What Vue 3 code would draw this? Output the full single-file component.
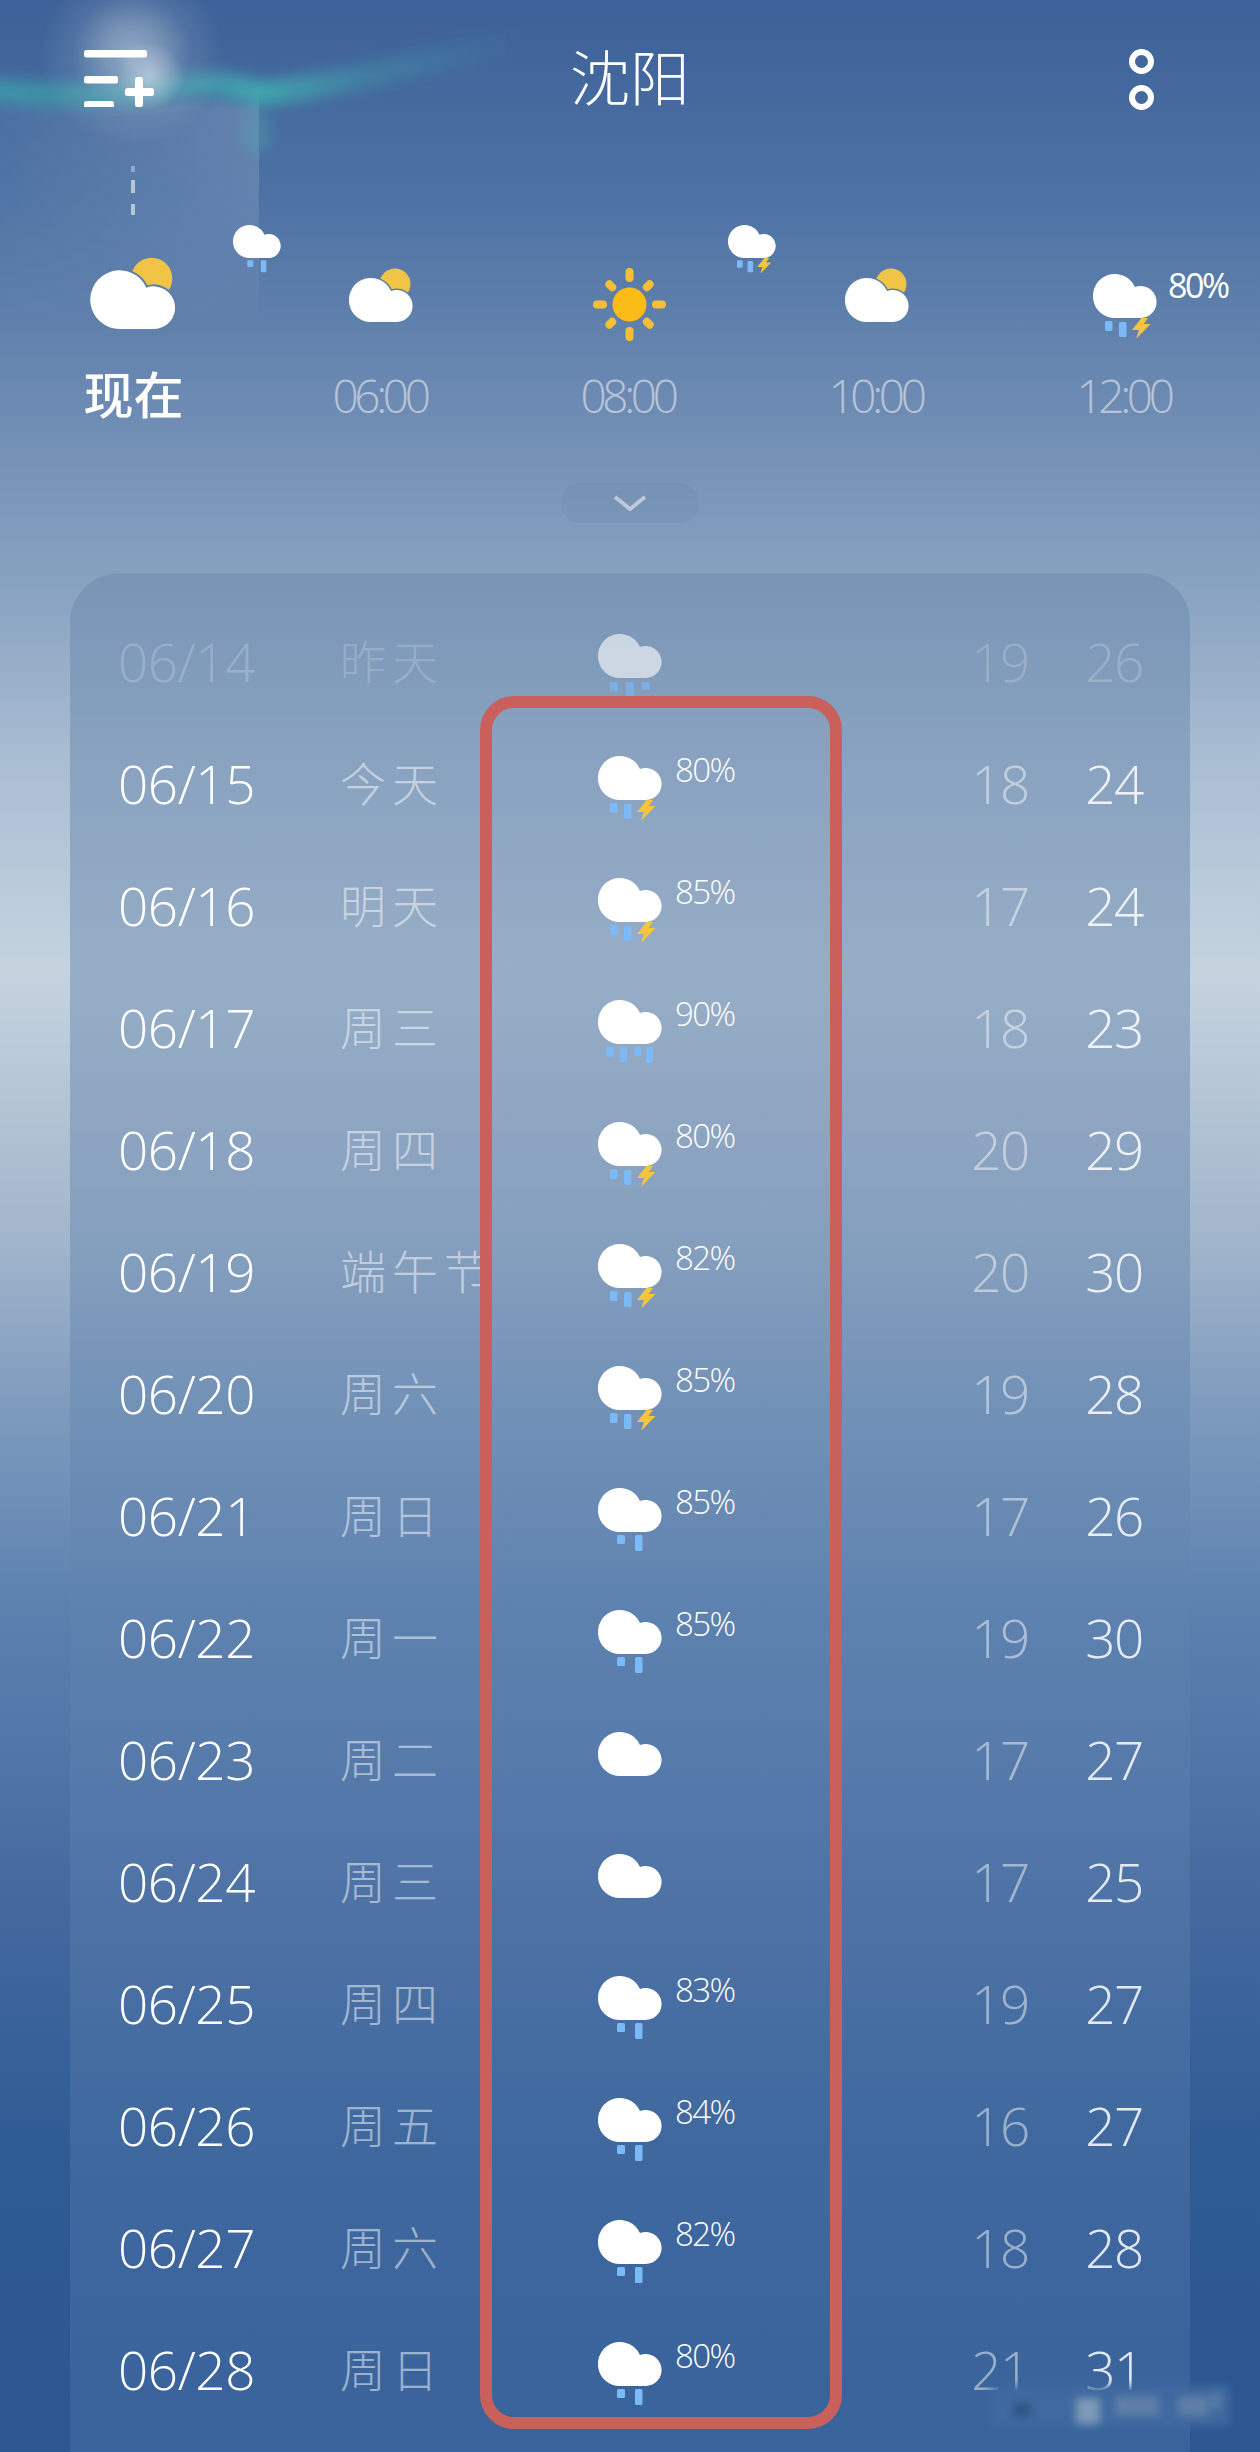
<template>
  <div class="page">
    <!-- sky streaks behind everything -->
    <svg class="sky" width="560" height="360" viewBox="0 0 560 360">
      <defs>
        <radialGradient id="glow">
          <stop offset="0" stop-color="#e8f4f0" stop-opacity="0.48" />
          <stop offset="0.3" stop-color="#e4f0ee" stop-opacity="0.34" />
          <stop offset="0.65" stop-color="#e0eeee" stop-opacity="0.1" />
          <stop offset="1" stop-color="#fff" stop-opacity="0" />
        </radialGradient>
        <radialGradient id="spot">
          <stop offset="0" stop-color="#fff" stop-opacity="0.4" />
          <stop offset="1" stop-color="#fff" stop-opacity="0" />
        </radialGradient>
        <linearGradient id="shaftX" x1="0" x2="1" y1="0" y2="0">
          <stop offset="0" stop-color="#fff" stop-opacity="0.03" />
          <stop offset="1" stop-color="#fff" stop-opacity="0.17" />
        </linearGradient>
        <linearGradient id="shaftFade" x1="0" x2="0" y1="0" y2="1">
          <stop offset="0" stop-color="#fff" stop-opacity="0" />
          <stop offset="0.08" stop-color="#fff" />
          <stop offset="0.5" stop-color="#fff" stop-opacity="0.7" />
          <stop offset="1" stop-color="#fff" stop-opacity="0" />
        </linearGradient>
        <linearGradient id="bandFade" gradientUnits="userSpaceOnUse" x1="0" y1="0" x2="520" y2="0">
          <stop offset="0" stop-color="#3c9aaa" stop-opacity="0.85" />
          <stop offset="0.3" stop-color="#3f9fac" stop-opacity="0.6" />
          <stop offset="0.5" stop-color="#41a9b0" stop-opacity="0.95" />
          <stop offset="0.7" stop-color="#41a0ac" stop-opacity="0.4" />
          <stop offset="1" stop-color="#41a0ac" stop-opacity="0" />
        </linearGradient>
        <mask id="shaftMask">
          <rect x="0" y="90" width="259" height="240" fill="url(#shaftFade)" />
        </mask>
        <filter id="soft" x="-20%" y="-200%" width="140%" height="500%">
          <feGaussianBlur stdDeviation="7" />
        </filter>
      </defs>
      <rect x="0" y="90" width="259" height="240" fill="url(#shaftX)" mask="url(#shaftMask)" />
      <path
        d="M-20 90Q100 100 170 88Q225 78 257 94Q330 88 520 40"
        fill="none"
        stroke="url(#bandFade)"
        stroke-width="24"
        filter="url(#soft)"
      />
      <ellipse cx="257" cy="132" rx="16" ry="22" fill="#4fa5b0" fill-opacity="0.35" filter="url(#soft)" />
      <circle cx="132" cy="54" r="92" fill="url(#glow)" />
      <circle cx="150" cy="76" r="34" fill="url(#spot)" />
      <rect x="131" y="166" width="4" height="6" fill="#cdd6e4" fill-opacity="0.5" />
      <rect x="131" y="180" width="4" height="13" fill="#cdd6e4" fill-opacity="0.8" />
      <rect x="131" y="204" width="4" height="11" fill="#cdd6e4" fill-opacity="0.8" />
    </svg>

    <svg class="defs" width="0" height="0">
      <defs>
        <path id="cloud" d="M22 44A22 22 0 1 1 42 13A16 16 0 1 1 47.5 44Z" fill="#fff" />
        <path id="bolt" d="M48.5 44L39 56L46 56L43 65L57.5 50L50.5 50L55 44Z" fill="#f5c63c" />
        <g id="cloudOnly"><use href="#cloud" /></g>
        <g id="rain2" fill="#7bb9f7">
          <use href="#cloud" />
          <rect x="19" y="47" width="8" height="9" rx="1.5" />
          <rect x="37" y="47" width="7.5" height="16" rx="1.5" />
        </g>
        <g id="rain3" fill="#7bb9f7">
          <use href="#cloud" />
          <rect x="12" y="48" width="8" height="9" rx="1.5" />
          <rect x="28" y="48" width="8" height="15" rx="1.5" />
          <rect x="44" y="48" width="8" height="8" rx="1.5" />
        </g>
        <g id="rain4" fill="#7bb9f7">
          <use href="#cloud" />
          <rect x="8" y="47" width="8" height="10" rx="1.5" />
          <rect x="22" y="47" width="7" height="15" rx="1.5" />
          <rect x="36" y="47" width="7" height="9" rx="1.5" />
          <rect x="48" y="47" width="7" height="16" rx="1.5" />
        </g>
        <g id="storm" fill="#7bb9f7">
          <use href="#cloud" />
          <rect x="12" y="47" width="7.5" height="10" rx="1.5" />
          <rect x="26" y="48" width="7.5" height="15" rx="1.5" />
          <use href="#bolt" />
        </g>
        <g id="partly">
          <circle cx="46" cy="16" r="15.5" fill="#f2c445" />
          <g transform="translate(0 10)">
            <path d="M22 44A22 22 0 1 1 42 13A16 16 0 1 1 47.5 44Z" fill="#fff" stroke="#5d7ea9" stroke-width="3" />
            <use href="#cloud" />
          </g>
        </g>
        <g id="sun">
          <circle cx="36.5" cy="36.5" r="17" fill="#fbbc18" />
          <g fill="#f6bf37">
            <rect
              v-for="a in [0, 45, 90, 135, 180, 225, 270, 315]"
              :key="a"
              x="32.5"
              :y="a % 90 ? 4 : 0"
              width="8"
              :height="a % 90 ? 12 : 14"
              rx="4"
              :transform="`rotate(${a} 36.5 36.5)`"
            />
          </g>
        </g>
      </defs>
    </svg>

    <header class="top">
      <svg class="menu" width="71" height="60" viewBox="0 0 71 60">
        <g fill="#fff">
          <rect x="0" y="3" width="63" height="7.5" rx="2.5" />
          <rect x="0" y="29" width="34" height="7.5" rx="2.5" />
          <rect x="0" y="54" width="30" height="7" rx="2.5" />
          <rect x="41" y="41" width="29" height="8" rx="2.5" />
          <rect x="51" y="30" width="8" height="30" rx="2.5" />
        </g>
      </svg>
      <h1 class="city">沈阳</h1>
      <svg class="more" width="25" height="61" viewBox="0 0 25 61">
        <g fill="none" stroke="#fff" stroke-width="6">
          <circle cx="12.5" cy="12.5" r="9.5" />
          <circle cx="12.5" cy="48.5" r="9.5" />
        </g>
      </svg>
    </header>

    <section class="hours">
      <div v-for="h in hours" :key="h.label" class="hour">
        <div class="hour-slot">
          <svg :class="['hour-icon', h.cls]" :viewBox="h.box" :width="h.w" :height="h.h">
            <use :href="'#' + h.kind" />
          </svg>
          <span v-if="h.pct" class="hour-pct">{{ h.pct }}</span>
        </div>
        <div :class="['hour-label', { now: h.now }]">{{ h.label }}</div>
      </div>
      <svg class="tiny tiny-a" width="48" height="48" viewBox="0 0 64 64"><use href="#rain2" /></svg>
      <svg class="tiny tiny-b" width="48" height="48" viewBox="0 0 64 64"><use href="#storm" /></svg>
    </section>

    <div class="fold">
      <svg width="34" height="18" viewBox="0 0 34 18">
        <path d="M2 3L17 15L32 3" fill="none" stroke="#fff" stroke-opacity="0.5" stroke-width="4" />
      </svg>
    </div>

    <section class="panel">
      <div v-for="(r, i) in days" :key="r.date" :class="['row', { past: i === 0 }]">
        <div class="date">{{ r.date }}</div>
        <div class="day">{{ r.day }}</div>
        <svg class="day-icon" width="64" height="64" viewBox="0 0 64 64"><use :href="'#' + r.kind" /></svg>
        <div class="pct">{{ r.pct ? r.pct + '%' : '' }}</div>
        <div class="low">{{ r.low }}</div>
        <div class="high">{{ r.high }}</div>
      </div>
    </section>

    <!-- hand-drawn highlight on the screenshot -->
    <div class="marker"></div>

    <!-- smudged-out watermark -->
    <div class="smudge">
      <i class="s1"></i><i class="s2"></i><i class="s3"></i><i class="s4"></i><i class="s5"></i>
    </div>
  </div>
</template>

<script setup>
const hours = [
  { label: '现在', kind: 'partly', box: '0 0 64 54', w: 86, h: 72, cls: 'big', now: true },
  { label: '06:00', kind: 'partly', box: '0 0 64 54', w: 64, h: 54, cls: 'mid' },
  { label: '08:00', kind: 'sun', box: '0 0 73 73', w: 73, h: 73, cls: 'mid' },
  { label: '10:00', kind: 'partly', box: '0 0 64 54', w: 64, h: 54, cls: 'mid' },
  { label: '12:00', kind: 'storm', box: '0 0 64 64', w: 64, h: 64, cls: 'low-icon', pct: '80%' }
]

const days = [
  { date: '06/14', day: '昨天', kind: 'rain3', low: 19, high: 26 },
  { date: '06/15', day: '今天', kind: 'storm', pct: 80, low: 18, high: 24 },
  { date: '06/16', day: '明天', kind: 'storm', pct: 85, low: 17, high: 24 },
  { date: '06/17', day: '周三', kind: 'rain4', pct: 90, low: 18, high: 23 },
  { date: '06/18', day: '周四', kind: 'storm', pct: 80, low: 20, high: 29 },
  { date: '06/19', day: '端午节', kind: 'storm', pct: 82, low: 20, high: 30 },
  { date: '06/20', day: '周六', kind: 'storm', pct: 85, low: 19, high: 28 },
  { date: '06/21', day: '周日', kind: 'rain2', pct: 85, low: 17, high: 26 },
  { date: '06/22', day: '周一', kind: 'rain2', pct: 85, low: 19, high: 30 },
  { date: '06/23', day: '周二', kind: 'cloudOnly', low: 17, high: 27 },
  { date: '06/24', day: '周三', kind: 'cloudOnly', low: 17, high: 25 },
  { date: '06/25', day: '周四', kind: 'rain2', pct: 83, low: 19, high: 27 },
  { date: '06/26', day: '周五', kind: 'rain2', pct: 84, low: 16, high: 27 },
  { date: '06/27', day: '周六', kind: 'rain2', pct: 82, low: 18, high: 28 },
  { date: '06/28', day: '周日', kind: 'rain2', pct: 80, low: 21, high: 31 }
]
</script>

<style scoped>
.page {
  position: relative;
  width: 1260px;
  height: 2452px;
  overflow: hidden;
  color: #fff;
  font-family: 'Open Sans', 'Noto Sans CJK SC', sans-serif;
  background: linear-gradient(
    180deg,
    #3d6198 0,
    #4d72a4 200px,
    #6c8ab2 400px,
    #7c97ba 500px,
    #8aa4c2 600px,
    #a8bcd2 750px,
    #c5d3df 973px,
    #aebfd2 1150px,
    #a0b4cb 1250px,
    #7f9cbe 1400px,
    #5d82b0 1600px,
    #44699f 1900px,
    #2f5b94 2150px,
    #2c5791 2452px
  );
}

.sky {
  position: absolute;
  left: 0;
  top: 0;
}

.defs {
  position: absolute;
}

.top {
  position: relative;
  display: grid;
  grid-template-columns: 504px 252px 504px;
  align-items: center;
  height: 154px;
}
.menu {
  margin-left: 84px;
}
.city {
  margin: 0 0 5px;
  text-align: center;
  font-family: 'Noto Sans CJK SC', sans-serif;
  font-size: 60px;
  font-weight: 300;
  line-height: 60px;
}
.more {
  justify-self: end;
  margin: 4px 106px 0 0;
}

.hours {
  position: relative;
  display: grid;
  grid-template-columns: repeat(5, 248px);
  padding: 103px 0 0 9px;
}
.hour {
  display: flex;
  flex-direction: column;
  align-items: center;
}
.hour-slot {
  position: relative;
  height: 108px;
}
.hour-icon {
  display: block;
}
.hour-icon.mid {
  margin-top: 11px;
}
.hour-icon.low-icon {
  margin-top: 17px;
}
.hour-pct {
  position: absolute;
  left: 75px;
  top: 8px;
  font-size: 34px;
  font-weight: 400;
  letter-spacing: -2.4px;
  line-height: 40px;
  white-space: nowrap;
}
.hour-label {
  margin-left: -3px;
  font-size: 46px;
  font-weight: 300;
  letter-spacing: -4.4px;
  line-height: 60px;
  color: rgba(255, 255, 255, 0.5);
}
.hour-label.now {
  margin: -3px 0 3px 1px;
  font-family: 'Noto Sans CJK SC', sans-serif;
  font-size: 50px;
  font-weight: 500;
  letter-spacing: 0;
  color: #fff;
}
.tiny {
  position: absolute;
  top: 71px;
}
.tiny-a {
  left: 233px;
}
.tiny-b {
  left: 728px;
}

.fold {
  display: flex;
  align-items: center;
  justify-content: center;
  width: 138px;
  height: 40px;
  margin: 58px auto 0;
  border-radius: 20px;
  background: rgba(70, 100, 145, 0.08);
}

.panel {
  margin: 50px 70px 0;
  padding: 29px 0 40px 48px;
  border-radius: 50px 50px 0 0;
  background: linear-gradient(180deg, rgba(110, 140, 175, 0.55), rgba(80, 120, 175, 0.35));
}
.row {
  display: flex;
  align-items: flex-start;
  height: 122px;
}
.date,
.low,
.high {
  font-size: 53px;
  font-weight: 300;
  line-height: 120px;
}
.date {
  width: 222px;
  letter-spacing: -0.4px;
}
.day {
  width: 258px;
  font-family: 'Noto Sans CJK SC', sans-serif;
  font-size: 46px;
  font-weight: 300;
  letter-spacing: 6px;
  line-height: 114px;
  white-space: nowrap;
  color: rgba(255, 255, 255, 0.5);
}
.day-icon {
  margin-top: 32px;
}
.pct {
  width: 285px;
  margin: 29px 0 0 13px;
  font-size: 33px;
  font-weight: 300;
  letter-spacing: -1.6px;
  line-height: 33px;
}
.low,
.high {
  width: 80px;
  text-align: center;
  letter-spacing: -1.5px;
}
.low {
  color: rgba(255, 255, 255, 0.48);
}
.high {
  margin-left: 34px;
  color: rgba(255, 255, 255, 0.85);
}
.past .date,
.past .day,
.past .low,
.past .high {
  color: rgba(255, 255, 255, 0.2);
}
.past .day-icon {
  opacity: 0.6;
}

.marker {
  position: absolute;
  left: 480px;
  top: 696px;
  width: 362px;
  height: 1733px;
  box-sizing: border-box;
  border: 12px solid #c9605c;
  border-radius: 34px;
}

.smudge {
  position: absolute;
  left: 990px;
  top: 2386px;
  width: 240px;
  height: 40px;
  background: #3f69a0;
  filter: blur(4px);
}
.smudge i {
  position: absolute;
  display: block;
  background: #5f7fa8;
}
.s1 {
  left: 24px;
  top: 18px;
  width: 16px;
  height: 12px;
  background: #2c4f80 !important;
}
.s2 {
  left: 86px;
  top: 12px;
  width: 24px;
  height: 26px;
  background: #7f9ab8 !important;
}
.s3 {
  left: 125px;
  top: 10px;
  width: 44px;
  height: 20px;
}
.s4 {
  left: 188px;
  top: 10px;
  width: 30px;
  height: 20px;
}
.s5 {
  left: 222px;
  top: 6px;
  width: 8px;
  height: 18px;
}
</style>
